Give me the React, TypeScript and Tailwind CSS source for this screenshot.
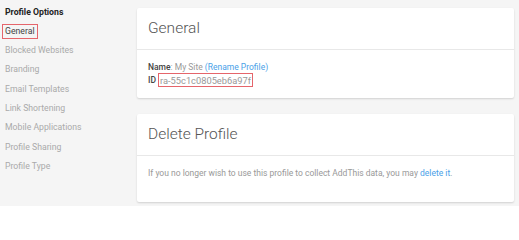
const items = [
  "General",
  "Blocked Websites",
  "Branding",
  "Email Templates",
  "Link Shortening",
  "Mobile Applications",
  "Profile Sharing",
  "Profile Type",
];

export default function App() {
  return (
    <div className="flex h-[206px] w-[519px] overflow-hidden bg-[#f5f5f5] font-['Roboto',sans-serif]">
      <aside className="w-[137px] shrink-0 pl-[5px] pt-[5px]">
        <h3 className="text-[8.7px] font-bold leading-[14px] text-[#222]">Profile Options</h3>
        <ul className="mt-[3px]">
          {items.map((item, i) =>
            i === 0 ? (
              <li key={item} className="flex h-[19px] items-center text-[8.7px]">
                <span className="-ml-[3px] flex h-[15px] items-center border border-[#e5656b] px-[2px] text-[#444]">
                  {item}
                </span>
              </li>
            ) : (
              <li key={item} className="flex h-[19.3px] items-center text-[8.7px] text-[#aaa]">
                {item}
              </li>
            )
          )}
        </ul>
      </aside>

      <main className="flex flex-1 flex-col gap-[16px] pr-[5px] pt-[8px]">
        <section className="rounded-[2px] bg-white shadow-[0_1px_2px_rgba(0,0,0,0.15)]">
          <div className="flex h-[42px] items-center border-b border-[#e8e8e8] px-[11px]">
            <h2 className="text-[15.5px] font-light text-[#555]">General</h2>
          </div>
          <div className="h-[48px] px-[11px] pt-[11px] text-[8.5px] leading-[13px] text-[#999]">
            <p className="h-[12px]">
              <span className="font-medium text-[#444]">Name</span>: My Site{" "}
              <span className="text-[#4a9fe8]">(Rename Profile)</span>
            </p>
            <p className="flex h-[14px] items-center gap-[2px]">
              <span className="font-medium text-[#444]">ID</span>
              <span className="flex h-[14px] items-center border border-[#e5656b] px-[1px] text-[9.3px] text-[#999]">
                ra-55c1c0805eb6a97f
              </span>
            </p>
          </div>
        </section>

        <section className="rounded-[2px] bg-white shadow-[0_1px_2px_rgba(0,0,0,0.15)]">
          <div className="flex h-[42px] items-center border-b border-[#e8e8e8] px-[11px]">
            <h2 className="text-[15.5px] font-light text-[#555]">Delete Profile</h2>
          </div>
          <div className="h-[46px] px-[11px] pt-[11px] text-[8.5px] leading-[12px] text-[#999]">
            <p>
              If you no longer wish to use this profile to collect AddThis data, you may{" "}
              <span className="text-[#4a9fe8]">delete it</span>.
            </p>
          </div>
        </section>
      </main>
    </div>
  );
}
